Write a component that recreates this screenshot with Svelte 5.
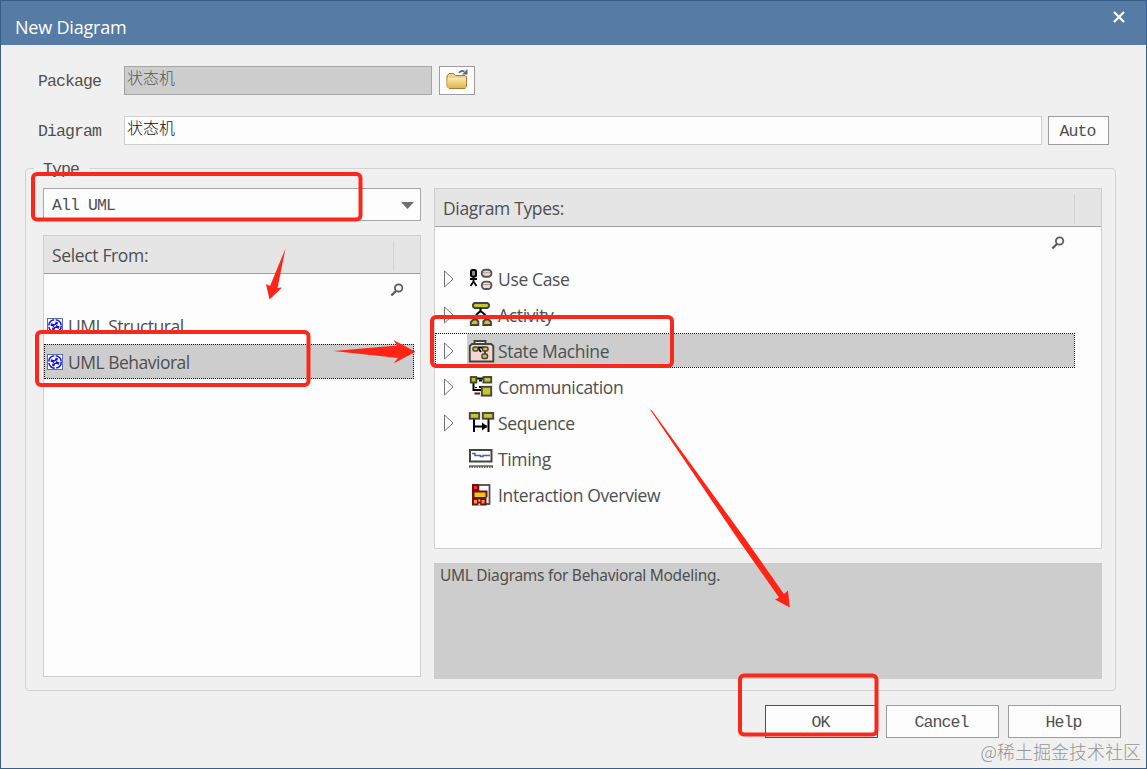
<script lang="ts">
  type DiagramType = { name: string; icon: string; expandable: boolean };

  const groups = ["UML Structural", "UML Behavioral"];

  const diagramTypes: DiagramType[] = [
    { name: "Use Case", icon: "usecase", expandable: true },
    { name: "Activity", icon: "activity", expandable: true },
    { name: "State Machine", icon: "state", expandable: true },
    { name: "Communication", icon: "communication", expandable: true },
    { name: "Sequence", icon: "sequence", expandable: true },
    { name: "Timing", icon: "timing", expandable: false },
    { name: "Interaction Overview", icon: "overview", expandable: false },
  ];

  let packageName = $state("状态机");
  let diagramName = $state("状态机");
  let group = $state("UML Behavioral");
  let selected = $state("State Machine");
</script>

{#snippet searchIcon()}
  <svg class="search-icon" width="14" height="14" viewBox="0 0 14 14" fill="none" stroke="#5c5c5c">
    <circle cx="8.6" cy="5" r="3.7" stroke-width="1.8" />
    <path d="M6 8L1.3 12.5" stroke-width="2.4" />
  </svg>
{/snippet}

{#snippet typeIcon(icon: string)}
  <svg class="type-icon" width="27" height="26" viewBox="0 0 27 26" fill="#c3c72c" stroke="#45453c" stroke-width="1.9">
    {#if icon === "usecase"}
      <g stroke="#000">
        <rect x="3" y="4" width="5" height="6.5" rx="1.5" fill="#8b8b8b" stroke-width="2" />
        <path d="M5.5 11V16M2 13H9M5.5 15.5L2.5 20M5.5 15.5L8.5 20" fill="none" stroke-width="1.8" />
      </g>
      <g fill="#f6d9d9" stroke="#555">
        <rect x="13.8" y="3.8" width="9.6" height="7" rx="3.3" />
        <rect x="13.8" y="15.6" width="9.6" height="7.4" rx="3.5" />
        <path d="M15 6.8H22M15 18.6H22" stroke-width="1" stroke="#a99" />
      </g>
    {:else if icon === "activity"}
      <path d="M6.5 1H19.5L21 2.5V4.5L19.5 6H6.5L5 4.5V2.5Z" />
      <path d="M12.5 6V10M12.5 9L8 13M12.5 9L17.5 13" fill="none" stroke="#000" stroke-width="2" />
      <path d="M5.5 17.5H8.5L10.3 19.5V23H2.8V20Z" />
      <path d="M17.5 17.5H20.5L23 20V23H15.3V19.5Z" />
    {:else if icon === "state"}
      <path d="M6.5 5V3H17.5V5" fill="#eee" />
      <path d="M4 6H23L25.3 8V23.5H1.8V8Z" fill="#f7d5d5" />
      <path d="M10 9.5H17M10 10L13 14" fill="none" stroke="#000" />
      <rect x="5" y="9" width="5" height="4" rx="1.5" stroke-width="1.5" />
      <rect x="14.5" y="9" width="5.500" height="4" rx="1.5" stroke-width="1.5" />
      <rect x="14" y="16" width="5.500" height="4.500" rx="1.5" stroke-width="1.5" />
      <path d="M17 13V16" />
    {:else if icon === "communication"}
      <path d="M8 4.5H15M5.5 9V16H13" fill="none" stroke="#000" stroke-width="2" />
      <path d="M11 6.5H14M11 13H14M8 13V14" stroke="#000" />
      <path d="M6.5 19.5H12" stroke="#8b0018" stroke-width="2" />
      <rect x="2.8" y="3" width="5.5" height="5.5" />
      <rect x="15.5" y="3" width="7.7" height="5.5" />
      <rect x="13.8" y="12.8" width="9.4" height="8.8" />
    {:else if icon === "sequence"}
      <path d="M6 9V22M20.5 9V22M6 16.5H19" stroke="#000" stroke-width="2" />
      <path d="M14 12.5L19.5 16.5L14 20.5Z" fill="#000" stroke="none" />
      <rect x="1.8" y="3" width="9.4" height="5.7" />
      <rect x="14.8" y="3" width="10.4" height="5.7" />
    {:else if icon === "timing"}
      <rect x="2" y="4" width="21.5" height="11.5" fill="#fff" stroke-width="2" />
      <path d="M4 7.5H7V9.5H12.5V10.5H15V9.5H22" fill="none" stroke="#4a63ad" stroke-width="1.5" />
      <path d="M1 20H25" stroke-width="1.2" />
      <path d="M1 21H25" stroke-width="1.6" stroke-dasharray="1.5 1" />
    {:else}
      <rect x="10.5" y="3" width="11" height="19" fill="#fff" stroke="#4c4c4c" stroke-width="1.8" />
      <path d="M4 2H11V8.5H19.5V15.5H18.5V23.5H4Z" fill="#7b0a12" stroke="none" />
      <rect x="6" y="4" width="3" height="3" fill="#e63522" stroke="none" />
      <rect x="6.5" y="10.5" width="11" height="4.5" fill="#e9cb12" stroke="none" />
      <path d="M6 18H9V21.500H6ZM13.500 18H16.500V21.500H13.500Z" fill="#efa01a" stroke="none" />
      <path d="M11.300 17.500V19.500M11.300 21.500V23.500" stroke="#f4dede" stroke-width="1.800" />
    {/if}
  </svg>
{/snippet}

<div class="dialog">
  <header class="titlebar">
    <h1>New Diagram</h1>
    <button class="close" aria-label="Close">
      <svg width="12" height="12" viewBox="0 0 12 12">
        <path d="M1 1L11 11M11 1L1 11" stroke="#fff" stroke-width="2.2" />
      </svg>
    </button>
  </header>

  <div class="row">
    <label for="package">Package</label>
    <input id="package" class="package" bind:value={packageName} disabled />
    <button class="browse" aria-label="Browse">
      <svg width="24" height="24" viewBox="0 0 24 24">
        <defs>
          <linearGradient id="folder" x1="0" y1="0" x2="0" y2="1">
            <stop offset="0" stop-color="#fbe3a0" />
            <stop offset="1" stop-color="#e5b14f" />
          </linearGradient>
        </defs>
        <path
          d="M2 17.5V7L4 4.5H8.5L10.5 6.5H20L21.5 8V17.5L20 19.5H4Z"
          fill="#f3cf7c"
          stroke="#a07c38"
          stroke-linejoin="round"
        />
        <path d="M2.5 9.500H21V17.500Q21 19 20 19H4Q2.500 19 2.500 17.500Z" fill="url(#folder)" />
        <path d="M3.5 9.5H20.5" stroke="#fff0bd" />
        <path d="M14 4Q15.5 .8 19.5 2.5" fill="none" stroke="#56658c" stroke-width="1.6" />
        <path d="M22.5 0V5.5H17Z" fill="#56658c" />
      </svg>
    </button>
  </div>

  <div class="row">
    <label for="diagram">Diagram</label>
    <input id="diagram" class="diagram" bind:value={diagramName} />
    <button class="auto">Auto</button>
  </div>

  <section class="type-box">
    <span class="legend">Type</span>
    <div class="left">
      <div class="combo">
        <span>All UML</span>
        <svg width="13" height="7" viewBox="0 0 13 7"><path d="M0 0H13L6.5 7Z" fill="#707070" /></svg>
      </div>
      <div class="panel">
        <div class="panel-header"><span>Select From:</span></div>
        <div class="search">{@render searchIcon()}</div>
        {#each groups as name}
          <button class="item group" class:selected={group === name} onclick={() => (group = name)}>
            <svg width="16" height="16" viewBox="0 0 16 16" fill="none">
              <rect x=".5" y=".5" width="15" height="15" fill="#fff" stroke="#5a6fa8" />
              <circle cx="8" cy="8" r="6.2" stroke="#1515e6" stroke-width="1.5" stroke-dasharray="8.2 1.54" />
              <path
                d="M7.5 7.5L3.8 6.500M8.500 7.500L10 4M8.500 8.500L12.200 9.500M7.500 8.500L6 12"
                stroke="#1515e6"
                stroke-width="2.600"
              />
              <path d="M6.500 9.500L9.500 6.500" stroke="#fff" />
            </svg>
            <span>{name}</span>
          </button>
        {/each}
      </div>
    </div>

    <div class="right">
      <div class="panel types">
        <div class="panel-header"><span>Diagram Types:</span></div>
        <div class="search">{@render searchIcon()}</div>
        {#each diagramTypes as type}
          <button class="item type" class:selected={selected === type.name} onclick={() => (selected = type.name)}>
            <span class="expander">
              {#if type.expandable}
                <svg width="10" height="18" viewBox="0 0 10 18" fill="none">
                  <path d="M.5 1V17L9 9Z" stroke="#737373" fill="#fff" />
                </svg>
              {/if}
            </span>
            <span class="type-label">
              {@render typeIcon(type.icon)}
              <span>{type.name}</span>
            </span>
          </button>
        {/each}
      </div>
      <div class="description"><span>UML Diagrams for Behavioral Modeling.</span></div>
    </div>
  </section>

  <footer>
    <button class="ok">OK</button>
    <button>Cancel</button>
    <button class="help">Help</button>
  </footer>

  <svg class="marks" width="1147" height="769" viewBox="0 0 1147 769">
    <g fill="none" stroke="#fa281c" stroke-width="4">
      <rect x="33" y="174" width="327.5" height="45.5" rx="4" />
      <rect x="37" y="332" width="271.5" height="53" rx="4" />
      <rect x="432" y="317" width="240" height="49" rx="4" />
      <rect x="740" y="675.5" width="136.5" height="59" rx="4" />
    </g>
    <g fill="#ff2415">
      <path d="M285.5 248.5L277.5 288L282 287.5L269.5 299.5L266 284L270 286Z" />
      <path d="M333.5 351L397 345.5L393.5 340L415.5 351.7L393.5 363.5L398 358Z" />
      <path d="M650 409.5L652 410.5L746 540L784 594L788 590.5L789.8 607.5L775 599.5L779 597.5L738.5 540Z" />
    </g>
  </svg>
  <span class="watermark">@稀土掘金技术社区</span>
</div>

<style>
  :global(body) {
    margin: 0;
    overflow: hidden;
  }

  .dialog {
    position: relative;
    display: flex;
    flex-direction: column;
    box-sizing: border-box;
    width: 1147px;
    height: 769px;
    border: 1px solid #385e8b;
    background: #f0f0f0;
    color: #4f4f4f;
    font: 16.5px "Liberation Mono", "Noto Sans CJK SC", monospace;
    letter-spacing: -0.9px;
  }

  .dialog * {
    box-sizing: border-box;
  }

  button {
    padding: 1px 2px 0 0;
    border: 1px solid #9c9c9c;
    background: #fdfdfd;
    color: inherit;
    font: inherit;
    letter-spacing: inherit;
  }

  .titlebar {
    display: flex;
    justify-content: space-between;
    height: 44px;
    padding: 0 21px 0 14px;
    background: #567ca6;
  }

  h1 {
    margin: 0;
    padding-top: 4px;
    color: #fff;
    font: 18px/44px "Open Sans", sans-serif;
    letter-spacing: -0.2px;
  }

  .close {
    display: flex;
    height: 12px;
    margin-top: 10px;
    padding: 0;
    border: none;
    background: none;
  }

  .row {
    display: flex;
    align-items: center;
    height: 29px;
    margin-top: 21px;
    padding-left: 37px;
  }

  .row label {
    width: 86px;
    padding-top: 1px;
  }

  input {
    height: 29px;
    padding: 0 2px 7px;
    border: 1px solid #cfcfcf;
    background: #fdfdfd;
    color: #111;
    font: 300 16px "Noto Sans CJK SC", sans-serif;
  }

  .package {
    width: 308px;
    border-color: #a5a5a5;
    background: #cdcdcd;
    color: #555;
  }

  .diagram {
    width: 918px;
  }

  .browse {
    display: grid;
    place-items: center;
    width: 36px;
    height: 29px;
    margin-left: 7px;
    padding: 0;
  }

  .auto {
    width: 61px;
    height: 29px;
    margin-left: 6px;
  }

  .type-box {
    position: relative;
    display: flex;
    gap: 13px;
    width: 1091px;
    height: 523px;
    margin: 23px 0 0 24px;
    padding: 19px 13px 11px 17px;
    border: 1px solid #d3d3d3;
    border-radius: 4px;
  }

  .legend {
    position: absolute;
    top: -9px;
    left: 8px;
    padding: 0 10px 0 9px;
    background: #f0f0f0;
    line-height: 20px;
  }

  .left {
    display: flex;
    flex-direction: column;
    gap: 14px;
    width: 378px;
    height: 489px;
  }

  .combo {
    display: flex;
    align-items: center;
    justify-content: space-between;
    height: 33px;
    padding: 1px 6px 0 8px;
    border: 1px solid #a6a6a6;
    background: #fdfdfd;
  }

  .panel {
    flex: 1;
    border: 1px solid #cfcfcf;
    background: #fdfdfd;
    font: 17.5px "Open Sans", sans-serif;
    letter-spacing: -0.35px;
  }

  .panel-header {
    display: flex;
    align-items: center;
    height: 38px;
    padding: 1px 0 0 8px;
    border-bottom: 1px solid #a0a0a0;
    background: linear-gradient(#d3d3d3, #d3d3d3) right 26px top 5px / 1px 30px no-repeat #e5e5e5;
  }

  .search {
    display: flex;
    justify-content: flex-end;
    height: 34px;
    padding: 9px 16px 0 0;
  }

  .item {
    display: flex;
    align-items: center;
    height: 35px;
    margin-bottom: 1px;
    padding: 0;
    border: 1px dotted transparent;
    background: none;
    white-space: nowrap;
    text-align: left;
  }

  .item.selected {
    border-color: #111;
  }

  .group {
    gap: 5px;
    width: 370px;
    padding-left: 2px;
    letter-spacing: -0.5px;
  }

  .group.selected {
    background: #cdcdcd;
  }

  .right {
    display: flex;
    flex-direction: column;
    gap: 14px;
    width: 668px;
    height: 491px;
  }

  .types .search {
    padding-right: 36px;
  }

  .type {
    width: 640px;
  }

  .expander {
    display: flex;
    flex: none;
    width: 31px;
    padding-left: 8px;
  }

  .type-label {
    display: flex;
    flex: 1;
    align-items: center;
    gap: 3px;
    height: 33px;
    padding-left: 1px;
  }

  .selected .type-label {
    background: #cdcdcd;
  }

  .description {
    height: 116px;
    padding: 0 6px;
    background: #cdcdcd;
    font: 15.5px/25px "Noto Sans", sans-serif;
    letter-spacing: -0.3px;
  }

  footer {
    display: flex;
    gap: 8px;
    margin: 14px 0 0 764px;
  }

  footer button {
    width: 113px;
    height: 33px;
  }

  footer .help {
    margin-left: 1px;
  }

  footer .ok {
    border-color: #3e546b;
  }

  .marks {
    position: absolute;
    top: -1px;
    left: -1px;
    pointer-events: none;
  }

  .watermark {
    position: absolute;
    right: 5px;
    bottom: 4px;
    color: #949494;
    font: 300 18px/26px "Noto Sans CJK SC", sans-serif;
    letter-spacing: 0;
    white-space: nowrap;
  }
</style>
